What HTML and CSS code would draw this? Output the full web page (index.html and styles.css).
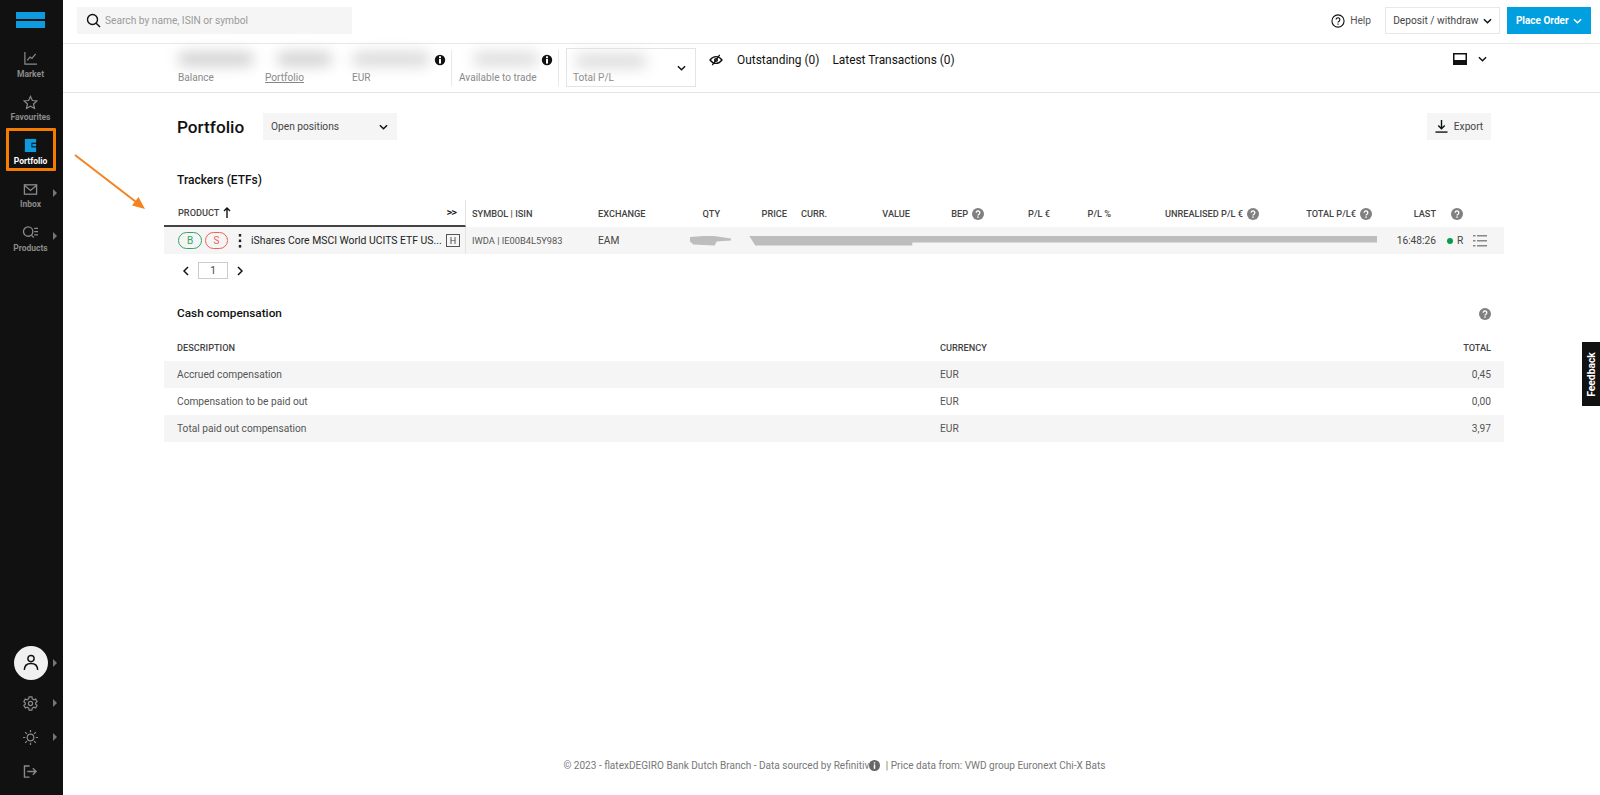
FILE: index.html
```html
<!DOCTYPE html>
<html lang="en">
<head>
    <meta charset="UTF-8">
    <meta name="viewport" content="width=device-width, initial-scale=1.0">
    <title>Portfolio</title>
    <link rel="stylesheet" href="styles.css">
</head>
<body>
    <svg class="sprite" width="0" height="0">
        <symbol id="help" viewBox="0 0 12 12">
            <circle cx="6" cy="6" r="6" fill="#808080"/>
            <path d="M4.200 4.700a1.800 1.800 0 1 1 2.800 1.500c-.7.400-1 .7-1 1.400" fill="none" stroke="#fff" stroke-width="1.300"/>
            <rect x="5.300" y="8.400" width="1.400" height="1.400" fill="#fff"/>
        </symbol>
        <symbol id="chev" viewBox="0 0 10 6">
            <path d="M1 1l4 4 4-4" fill="none" stroke="currentColor" stroke-width="1.600"/>
        </symbol>
        <symbol id="info" viewBox="0 0 12 12">
            <circle cx="6" cy="6" r="5.200" fill="#111"/>
            <rect x="5" y="2.300" width="2" height="1.700" fill="#fff"/>
            <rect x="5" y="4.800" width="2" height="4.800" fill="#fff"/>
        </symbol>
    </svg>

    <div class="page">
        <!-- Sidebar -->
        <aside class="sidebar">
            <div class="logo"><span></span><span></span></div>
            <nav class="nav">
                <a class="nav-item">
                    <svg width="15" height="15" viewBox="0 0 16 16" fill="none" stroke="#8a8a8a" stroke-width="1.300"><path d="M2 1v13h13"/><path d="M4.500 10l3-3.500 2 1.500 4-5"/></svg>
                    <span>Market</span>
                </a>
                <a class="nav-item">
                    <svg width="15" height="15" viewBox="0 0 16 16" fill="none" stroke="#8a8a8a" stroke-width="1.300"><path d="M8 1.500l2 4.400 4.800.5-3.600 3.200 1 4.700L8 11.900l-4.200 2.400 1-4.700L1.200 6.400 6 5.900z"/></svg>
                    <span>Favourites</span>
                </a>
                <a class="nav-item active">
                    <svg width="15" height="15" viewBox="0 0 16 16"><rect x="2" y="1" width="12" height="14" fill="#0e9ade"/><path d="M9 5h6v5H9z" fill="#111"/><rect x="10" y="6.200" width="4" height="2.600" fill="#0e9ade"/></svg>
                    <span>Portfolio</span>
                </a>
                <a class="nav-item has-sub">
                    <svg width="15" height="15" viewBox="0 0 16 16" fill="none" stroke="#8a8a8a" stroke-width="1.400"><rect x="1.500" y="3" width="13" height="10"/><path d="M1.500 3.500L8 9l6.500-5.500"/></svg>
                    <span>Inbox</span>
                </a>
                <a class="nav-item has-sub">
                    <svg width="17" height="15" viewBox="0 0 18 16" fill="none" stroke="#8a8a8a" stroke-width="1.400"><circle cx="6.500" cy="7" r="5"/><path d="M10 11l2.500 2.500"/><path d="M13 3.500h4M13 7h4M13 10.500h4"/></svg>
                    <span>Products</span>
                </a>
            </nav>
            <div class="side-bottom">
                <div class="side-row has-sub avatar-row">
                    <div class="avatar">
                        <svg width="16" height="18" viewBox="0 0 18 20" fill="none" stroke="#111" stroke-width="1.600"><circle cx="9" cy="5" r="3.500"/><path d="M1.500 18c0-5 3-7.500 7.500-7.500s7.500 2.500 7.500 7.500"/></svg>
                    </div>
                </div>
                <div class="side-row has-sub gear-row">
                    <svg width="15" height="15" viewBox="0 0 16 16" fill="none" stroke="#8a8a8a" stroke-width="1.300"><path d="M6.500 1h3l.4 2 1.700 1 1.900-.7 1.500 2.600-1.500 1.300v1.600l1.500 1.300-1.500 2.600-1.900-.7-1.700 1-.4 2h-3l-.4-2-1.700-1-1.900.7L.9 10.100l1.500-1.300V7.200L.9 5.900l1.500-2.600 1.900.7 1.700-1z"/><circle cx="8" cy="8" r="2.200"/></svg>
                </div>
                <div class="side-row has-sub sun-row">
                    <svg width="15" height="15" viewBox="0 0 16 16" fill="none" stroke="#8a8a8a" stroke-width="1.300"><circle cx="8" cy="8" r="3.500"/><path d="M8 0v2.500M8 13.500V16M0 8h2.500M13.500 8H16M2.300 2.300l1.800 1.800M11.900 11.900l1.800 1.800M2.300 13.700l1.800-1.800M11.900 4.100l1.800-1.800"/></svg>
                </div>
                <div class="side-row exit-row">
                    <svg width="15" height="13" viewBox="0 0 16 14" fill="none" stroke="#8a8a8a" stroke-width="1.500"><path d="M7 1H1.500v12H7"/><path d="M4.500 7H14M10.500 3.500L14 7l-3.500 3.500"/></svg>
                </div>
            </div>
        </aside>

        <div class="main">
            <!-- Top bar -->
            <header class="topbar">
                <div class="search">
                    <svg width="15" height="15" viewBox="0 0 15 15" fill="none" stroke="#111" stroke-width="1.400"><circle cx="6.500" cy="6.500" r="5"/><path d="M10.200 10.200L14 14"/></svg>
                    <span>Search by name, ISIN or symbol</span>
                </div>
                <div class="top-actions">
                    <a class="help-link">
                        <svg width="14" height="14" viewBox="0 0 15 15" fill="none" stroke="#111" stroke-width="1.200"><circle cx="7.500" cy="7.500" r="6.500"/><path d="M5.500 6a2 2 0 1 1 3.100 1.700c-.8.500-1.100.8-1.100 1.500"/><path d="M7.500 10.300v1.300"/></svg>
                        Help
                    </a>
                    <button class="btn-deposit">Deposit / withdraw <svg class="chev"><use href="#chev"/></svg></button>
                    <button class="btn-order">Place Order <svg class="chev"><use href="#chev"/></svg></button>
                </div>
            </header>

            <!-- Account summary -->
            <section class="summary">
                <div class="stat stat-balance"><div class="blob"></div><div class="stat-label">Balance</div></div>
                <div class="stat stat-portfolio"><div class="blob"></div><div class="stat-label underlined">Portfolio</div></div>
                <div class="stat stat-eur">
                    <div class="blob"></div>
                    <div class="stat-label">EUR</div>
                    <svg class="stat-info" width="12" height="12"><use href="#info"/></svg>
                </div>
                <div class="stat stat-trade">
                    <div class="blob"></div>
                    <div class="stat-label">Available to trade</div>
                    <svg class="stat-info" width="12" height="12"><use href="#info"/></svg>
                </div>
                <div class="pl-box">
                    <div class="blob"></div>
                    <div class="stat-label">Total P/L</div>
                    <svg class="pl-chev chev"><use href="#chev"/></svg>
                </div>
                <svg class="eye" width="14" height="12" viewBox="0 0 15 13" fill="none" stroke="#111" stroke-width="1.400"><path d="M1 6.500C3 3.800 5 2.800 7.500 2.800S12 3.800 14 6.500C12 9.200 10 10.200 7.500 10.200S3 9.200 1 6.500z"/><path d="M11.500 1L3.500 12"/><circle cx="7.500" cy="6.500" r="1.500"/></svg>
                <a class="summary-link">Outstanding (0)</a>
                <a class="summary-link">Latest Transactions (0)</a>
                <div class="panel-toggle">
                    <svg width="14" height="12" viewBox="0 0 14 12"><rect x=".75" y=".75" width="12.500" height="10.500" fill="#fff" stroke="#111" stroke-width="1.500"/><rect x="1" y="7" width="12" height="4" fill="#111"/></svg>
                    <svg class="chev"><use href="#chev"/></svg>
                </div>
            </section>

            <section class="content">
                <div class="title-row">
                    <h1>Portfolio</h1>
                    <div class="select">Open positions <svg class="chev"><use href="#chev"/></svg></div>
                    <button class="btn-export">
                        <svg width="13" height="13" viewBox="0 0 14 14" fill="none" stroke="#111" stroke-width="1.500"><path d="M7 0v9M3.500 6L7 9.500 10.500 6"/><path d="M.5 13h13"/></svg>
                        Export
                    </button>
                </div>

                <h2 class="section-title">Trackers (ETFs)</h2>

                <div class="positions">
                    <div class="pos-grid pos-head">
                        <div class="cell-product head-product">
                            <span>PRODUCT</span>
                            <svg width="8" height="11" viewBox="0 0 8 11" fill="none" stroke="#111" stroke-width="1.400"><path d="M4 11V1M1 4l3-3 3 3"/></svg>
                            <span class="expand">&gt;&gt;</span>
                        </div>
                        <div class="cell-left">SYMBOL | ISIN</div>
                        <div class="cell-left">EXCHANGE</div>
                        <div class="cell-right">QTY</div>
                        <div class="cell-right">PRICE</div>
                        <div class="cell-curr">CURR.</div>
                        <div class="cell-right">VALUE</div>
                        <div class="cell-right">BEP <svg class="q" width="12" height="12"><use href="#help"/></svg></div>
                        <div class="cell-right">P/L €</div>
                        <div class="cell-right">P/L %</div>
                        <div class="cell-right">UNREALISED P/L € <svg class="q" width="12" height="12"><use href="#help"/></svg></div>
                        <div class="cell-right">TOTAL P/L€ <svg class="q" width="12" height="12"><use href="#help"/></svg></div>
                        <div class="cell-right">LAST</div>
                        <div class="cell-end"><svg width="12" height="12"><use href="#help"/></svg></div>
                    </div>
                    <div class="pos-grid pos-row">
                        <div class="cell-product">
                            <span class="pill pill-buy">B</span>
                            <span class="pill pill-sell">S</span>
                            <svg class="dots" width="4" height="14" viewBox="0 0 4 14" fill="#222"><rect x=".8" y="0" width="2.400" height="2.600"/><rect x=".8" y="5.500" width="2.400" height="2.600"/><rect x=".8" y="11" width="2.400" height="2.600"/></svg>
                            <span class="product-name">iShares Core MSCI World UCITS ETF US...</span>
                            <span class="h-tag">H</span>
                        </div>
                        <div class="cell-left isin">IWDA | IE00B4L5Y983</div>
                        <div class="cell-left">EAM</div>
                        <div class="redact-qty"></div>
                        <div class="redact-bar"></div>
                        <div class="cell-right last-time">16:48:26</div>
                        <div class="cell-end row-end">
                            <i class="live-dot"></i>R
                            <svg class="row-menu" width="14" height="12" viewBox="0 0 14 12" fill="#888"><rect y="0" width="2.500" height="1.500"/><rect x="4" y="0" width="10" height="1.500"/><rect y="5" width="2.500" height="1.500"/><rect x="4" y="5" width="10" height="1.500"/><rect y="10" width="2.500" height="1.500"/><rect x="4" y="10" width="10" height="1.500"/></svg>
                        </div>
                    </div>
                </div>

                <div class="pager">
                    <svg class="pager-chev" width="6" height="10" viewBox="0 0 6 10" fill="none" stroke="#111" stroke-width="1.500"><path d="M5 1L1 5l4 4"/></svg>
                    <span class="page-box">1</span>
                    <svg class="pager-chev" width="6" height="10" viewBox="0 0 6 10" fill="none" stroke="#111" stroke-width="1.500"><path d="M1 1l4 4-4 4"/></svg>
                </div>

                <div class="cash-title">
                    <h2>Cash compensation</h2>
                    <svg width="12" height="12"><use href="#help"/></svg>
                </div>

                <div class="cash-grid cash-head">
                    <div>DESCRIPTION</div><div>CURRENCY</div><div class="amount">TOTAL</div>
                </div>
                <div class="cash-grid cash-row"><div>Accrued compensation</div><div>EUR</div><div class="amount">0,45</div></div>
                <div class="cash-grid cash-row"><div>Compensation to be paid out</div><div>EUR</div><div class="amount">0,00</div></div>
                <div class="cash-grid cash-row"><div>Total paid out compensation</div><div>EUR</div><div class="amount">3,97</div></div>
            </section>

            <footer class="footer">
                © 2023 - flatexDEGIRO Bank Dutch Branch - Data sourced by Refinitiv<svg class="foot-info" width="11" height="11" viewBox="0 0 12 12"><circle cx="6" cy="6" r="6" fill="#666"/><rect x="5.200" y="2.400" width="1.600" height="1.500" fill="#fff"/><rect x="5.200" y="4.800" width="1.600" height="4.800" fill="#fff"/></svg> | Price data from: VWD group Euronext Chi-X Bats
            </footer>
        </div>
    </div>

    <!-- Annotation drawn on the screenshot -->
    <div class="mark-box"></div>
    <svg class="mark-arrow" width="76" height="60" viewBox="0 0 76 60" fill="none"><path d="M1 1L66 51" stroke="#f5821f" stroke-width="2"/><path d="M71 55L58 51.500 64.500 43z" fill="#f5821f"/></svg>

    <div class="feedback"><span>Feedback</span></div>
</body>
</html>
```

FILE: styles.css
```css
* {
    box-sizing: border-box;
}

body {
    margin: 0;
    height: 795px;
    overflow: hidden;
    font-family: 'Roboto', 'Liberation Sans', sans-serif;
    font-size: 10.2px;
    color: #444;
    background: #fff;
    position: relative;
}

h1, h2 {
    margin: 0;
}

button {
    font-family: inherit;
    cursor: pointer;
}

.sprite {
    position: absolute;
}

.chev {
    width: 9px;
    height: 6px;
    color: #111;
    flex: none;
}

.page {
    display: flex;
    height: 795px;
}

/* Sidebar */
.sidebar {
    width: 63px;
    flex: none;
    background: #111;
    display: flex;
    flex-direction: column;
    align-items: center;
    padding-right: 2px;
    color: #8a8a8a;
}

.logo {
    margin-top: 12px;
    width: 29px;
    display: flex;
    flex-direction: column;
    gap: 2px;
}

.logo span {
    height: 7px;
    background: #0e9ade;
}

.nav {
    margin-top: 23px;
    width: 100%;
    display: flex;
    flex-direction: column;
}

.nav-item {
    height: 43.5px;
    display: flex;
    flex-direction: column;
    align-items: center;
    font-size: 8.5px;
    font-weight: 700;
    position: relative;
}

.nav-item span {
    line-height: 13px;
    margin-top: 1.5px;
}

.nav-item.active {
    color: #fff;
}

.has-sub::after {
    content: '';
    position: absolute;
    left: 53px;
    border-left: 4px solid #777;
    border-top: 4px solid transparent;
    border-bottom: 4px solid transparent;
}

.nav-item.has-sub::after {
    top: 7px;
}

.side-bottom {
    margin-top: auto;
    width: 100%;
    display: flex;
    flex-direction: column;
    align-items: center;
    padding-bottom: 17px;
}

.side-row {
    width: 100%;
    display: flex;
    justify-content: center;
    align-items: center;
    position: relative;
}

.side-row.has-sub::after {
    top: 50%;
    margin-top: -4px;
}

.avatar-row {
    height: 34px;
}

.gear-row {
    height: 16px;
    margin-top: 15px;
}

.sun-row {
    height: 16px;
    margin-top: 18px;
}

.exit-row {
    height: 14px;
    margin-top: 19px;
}

.avatar {
    width: 34px;
    height: 34px;
    border-radius: 50%;
    background: #f0f0f0;
    display: flex;
    align-items: center;
    justify-content: center;
}

/* Main column */
.main {
    flex: 1;
    min-width: 0;
    display: flex;
    flex-direction: column;
}

.topbar {
    height: 44px;
    flex: none;
    border-bottom: 1px solid #e8e8e8;
    display: flex;
    align-items: flex-start;
    justify-content: space-between;
    padding: 7px 9px 0 14px;
}

.search {
    width: 275px;
    height: 27px;
    background: #f5f5f5;
    display: flex;
    align-items: center;
    gap: 4px;
    padding-left: 9px;
    color: #999;
}

.top-actions {
    display: flex;
    align-items: center;
    height: 27px;
}

.help-link {
    display: flex;
    align-items: center;
    gap: 5px;
    color: #555;
    margin-right: 14px;
}

.btn-deposit {
    width: 115px;
    height: 27px;
    border: 1px solid #e8e8e8;
    background: #fff;
    color: #444;
    font-size: 10.2px;
    padding: 0;
    margin-right: 7px;
}

.btn-deposit .chev {
    margin-left: 2px;
}

.btn-order {
    width: 84px;
    height: 27px;
    border: none;
    background: #009fdf;
    color: #fff;
    font-size: 10px;
    font-weight: 700;
    padding: 0;
}

.btn-order .chev {
    color: #fff;
    margin-left: 2px;
}

.summary {
    height: 49px;
    flex: none;
    border-bottom: 1px solid #e4e4e4;
    display: flex;
    align-items: flex-start;
    padding-left: 115px;
    position: relative;
}

.stat {
    height: 36px;
    margin-top: 6px;
    position: relative;
    display: flex;
    flex-direction: column;
}

.stat-label {
    color: #888;
    font-size: 10.1px;
    line-height: 13px;
    margin-top: 5px;
}

.stat-label.underlined {
    text-decoration: underline;
}

.blob {
    height: 14px;
    flex: none;
    margin-top: 2px;
    background: #d0d0d0;
    border-radius: 8px;
    filter: blur(7px);
}

.stat-balance {
    width: 87px;
}

.stat-balance .blob {
    width: 76px;
}

.stat-portfolio {
    width: 87px;
}

.stat-portfolio .blob {
    width: 55px;
    margin-left: 12px;
}

.stat-eur {
    width: 100px;
    border-right: 1px solid #e8e8e8;
}

.stat-eur .blob {
    width: 78px;
    background: #d8d8d8;
}

.stat-trade {
    width: 107px;
    border-right: 1px solid #e8e8e8;
    padding-left: 7px;
}

.stat-trade .blob {
    width: 66px;
    margin-left: 14px;
    background: #dcdcdc;
}

.stat-info {
    position: absolute;
    right: 5px;
    top: 4px;
}

.pl-box {
    width: 130px;
    height: 39px;
    margin: 4px 0 0 7px;
    border: 1px solid #e4e4e4;
    padding-left: 6px;
    position: relative;
}

.pl-box .blob {
    width: 72px;
    margin: 5px 0 0 2px;
    background: #dcdcdc;
}

.pl-box .stat-label {
    margin-top: 3px;
}

.pl-chev {
    position: absolute;
    right: 9px;
    top: 16px;
}

.eye {
    margin: 10px 0 0 13px;
    flex: none;
}

.summary-link {
    color: #111;
    font-size: 11.9px;
    line-height: 14px;
    margin: 9px 0 0 14px;
}

.summary-link + .summary-link {
    margin-left: 13px;
}

.panel-toggle {
    margin-left: auto;
    margin-right: 113px;
    margin-top: 9px;
    display: flex;
    align-items: center;
    gap: 11px;
}

/* Content */
.content {
    padding: 20px 96px 0 101px;
}

.title-row {
    display: flex;
    align-items: center;
    height: 27px;
    padding: 0 13px;
}

h1 {
    font-size: 17.2px;
    font-weight: 500;
    color: #111;
    width: 86px;
}

.select {
    width: 134px;
    height: 27px;
    background: #f5f5f5;
    display: flex;
    align-items: center;
    justify-content: space-between;
    padding: 0 9px 0 8px;
    color: #444;
}

.btn-export {
    margin-left: auto;
    width: 64px;
    height: 27px;
    border: none;
    background: #f5f5f5;
    color: #444;
    font-size: 10.2px;
    display: flex;
    align-items: center;
    justify-content: center;
    gap: 6px;
    padding: 0;
}

.section-title {
    font-size: 12px;
    font-weight: 500;
    color: #111;
    margin: 32px 0 0 13px;
    line-height: 16px;
}

.positions {
    margin-top: 12px;
}

.pos-grid {
    display: grid;
    grid-template-columns: 302px 126px 88px 40px 67px 53px 70px 74px 66px 61px 148px 113px 64px 68px;
    align-items: center;
}

.pos-head {
    height: 27px;
    font-weight: 500;
    font-size: 9.2px;
    color: #444;
}

.pos-head > div:first-child {
    border-bottom: 2px solid #444;
    height: 27px;
}

.pos-row {
    height: 27px;
    background: #f5f5f5;
}

.cell-product {
    display: flex;
    align-items: center;
    padding-left: 14px;
    height: 100%;
    border-right: 1px solid #e4e4e4;
    position: relative;
}

.head-product {
    gap: 4px;
}

.expand {
    position: absolute;
    right: 9px;
    color: #111;
    font-size: 11px;
    letter-spacing: -1px;
}

.cell-left {
    padding-left: 6px;
}

.cell-curr {
    padding-left: 14px;
}

.cell-right {
    display: flex;
    justify-content: flex-end;
    align-items: center;
    white-space: nowrap;
}

.q {
    margin-left: 4px;
}

.cell-end {
    padding-left: 15px;
    display: flex;
    align-items: center;
}

.pill {
    width: 24px;
    height: 17px;
    border-radius: 9px;
    border: 1px solid #2fa866;
    color: #2fa866;
    display: flex;
    align-items: center;
    justify-content: center;
    font-size: 10px;
}

.pill-sell {
    width: 23px;
    margin-left: 3px;
    border-color: #f0604f;
    color: #f0604f;
}

.dots {
    margin: 0 9px 0 10px;
    flex: none;
}

.product-name {
    color: #222;
    font-size: 10.4px;
    white-space: nowrap;
}

.h-tag {
    position: absolute;
    left: 282px;
    width: 14px;
    height: 13px;
    border: 1px solid #555;
    display: flex;
    align-items: center;
    justify-content: center;
    font-size: 9px;
}

.isin {
    font-size: 9.3px;
    color: #555;
}

.redact-qty {
    grid-column: 4;
    height: 10px;
    width: 41px;
    margin-left: 10px;
    background: #bdbdbd;
    clip-path: polygon(0 15%, 50% 0, 100% 30%, 100% 50%, 65% 60%, 60% 100%, 8% 90%, 0 60%);
}

.redact-bar {
    grid-column: 5 / 13;
    height: 10px;
    margin-left: 29px;
    margin-right: -5px;
    background: #bdbdbd;
    clip-path: polygon(0 0, 100% 0, 100% 70%, 26% 70%, 26% 100%, 1% 100%);
}

.last-time {
    grid-column: 13;
    color: #444;
}

.row-end {
    grid-column: 14;
    padding-left: 11px;
    color: #444;
}

.live-dot {
    width: 6px;
    height: 6px;
    border-radius: 50%;
    background: #0a9a4a;
    margin-right: 4px;
}

.row-menu {
    margin-left: 10px;
}

.pager {
    display: flex;
    align-items: center;
    margin: 8px 0 0 19px;
    height: 17px;
}

.page-box {
    width: 30px;
    height: 17px;
    border: 1px solid #ccc;
    display: flex;
    align-items: center;
    justify-content: center;
    margin: 0 9px;
    color: #444;
}

.cash-title {
    display: flex;
    justify-content: space-between;
    align-items: center;
    margin-top: 26px;
    padding: 0 13px;
    height: 16px;
}

.cash-title h2 {
    font-size: 11.8px;
    font-weight: 500;
    color: #111;
}

.cash-title svg {
    margin-top: 2px;
}

.cash-grid {
    display: grid;
    grid-template-columns: 763px 1fr 100px;
    align-items: center;
    padding: 0 13px;
}

.cash-head {
    height: 27px;
    margin-top: 13px;
    font-size: 9.2px;
    font-weight: 500;
}

.cash-row {
    height: 27px;
    color: #555;
}

.cash-row:nth-of-type(even) {
    background: #f5f5f5;
}

.amount {
    text-align: right;
}

.footer {
    margin-top: auto;
    height: 35px;
    padding-left: 6px;
    text-align: center;
    color: #777;
    font-size: 10.05px;
}

.foot-info {
    vertical-align: -2px;
    margin-right: 3px;
}

/* Annotations */
.mark-box {
    position: absolute;
    left: 6px;
    top: 128px;
    width: 50px;
    height: 43px;
    border: 3px solid #f57c00;
    border-radius: 1px;
}

.mark-arrow {
    position: absolute;
    left: 74px;
    top: 154px;
}

.feedback {
    position: absolute;
    right: 0;
    top: 342px;
    width: 18px;
    height: 64px;
    background: #111;
    color: #fff;
    font-size: 10.3px;
    font-weight: 700;
    display: flex;
    align-items: center;
    justify-content: center;
}

.feedback span {
    transform: rotate(-90deg);
}
```
